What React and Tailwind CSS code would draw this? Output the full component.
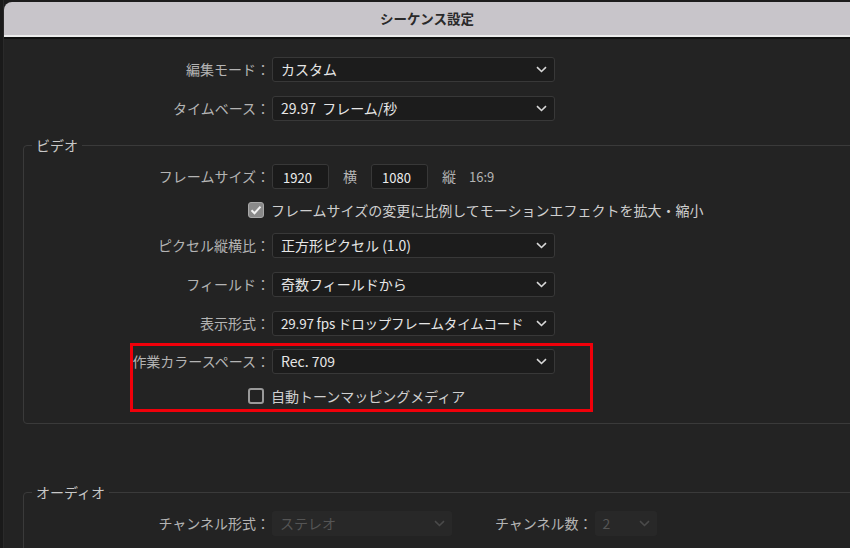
import React from 'react';

const FONT = { fontFamily: '"Noto Sans CJK JP", "Noto Sans", sans-serif' };

const Chevron = ({ className }) => (
    <svg width="11" height="7" viewBox="0 0 11 7" className={className}>
        <path d="M1 1.2l4.5 4.3L10 1.2" fill="none" stroke="currentColor" strokeWidth="1.6" />
    </svg>
);

const Select = ({ value, textClass = 'text-[14px]' }) => (
    <div className="w-[283px] h-[25px] flex items-center justify-between gap-[4px] pl-[8px] pr-[7px] bg-[#1c1c1c] border border-[#383838] rounded-[3px] text-[#e6e6e6]">
        <span className={`${textClass} whitespace-nowrap`}>{value}</span>
        <Chevron className="text-[#d8d8d8] shrink-0" />
    </div>
);

const Row = ({ label, labelClass, children }) => (
    <div className="flex items-center h-[25px] shrink-0">
        <div className={`${labelClass} shrink-0 text-right text-[14px] text-[#b4b4b4] whitespace-nowrap`}>{label}：</div>
        <div className="ml-[2px] flex items-center">{children}</div>
    </div>
);

const Checkbox = ({ checked, label }) => (
    <div className="flex items-center h-[20px] ml-[224px] gap-[7px]">
        {checked ? (
            <div className="w-[16px] h-[16px] rounded-[3px] bg-[#8a8a8a] border border-[#a8a8a8] flex items-center justify-center">
                <svg width="12" height="10" viewBox="0 0 12 10">
                    <path d="M1.5 5.2l3 3 6-6.6" fill="none" stroke="#f2f2f2" strokeWidth="2" />
                </svg>
            </div>
        ) : (
            <div className="w-[16px] h-[16px] rounded-[3px] border-2 border-[#9a9a9a]"></div>
        )}
        <span className="text-[14px] text-[#cfcfcf] whitespace-nowrap">{label}</span>
    </div>
);

const Group = ({ title, className, children }) => (
    <div className={`relative shrink-0 ml-[19px] w-[860px] border border-[#3a3a3a] rounded-[4px] ${className}`}>
        <span className="absolute -top-[11px] left-[8px] px-[4px] bg-[#232323] text-[14px] leading-[20px] text-[#c8c8c8]">{title}</span>
        {children}
    </div>
);

export default function App() {
    return (
        <div className="w-[850px] h-[548px] overflow-hidden flex bg-[#1c1c1c]" style={FONT}>
            <div className="w-[4px] shrink-0 h-full bg-[#1a1a1a] border-r border-[#2a2a2a]"></div>
            <div className="flex-1 min-w-0 flex flex-col pt-[2px]">
                {/* Title bar */}
                <div className="h-[35px] shrink-0 bg-[#c8c5ca] rounded-tl-[8px] border-b-2 border-[#ececec] flex items-center justify-center">
                    <span className="text-[13.5px] font-bold text-[#2a2a2a]">シーケンス設定</span>
                </div>
                <div className="h-[2px] shrink-0 bg-[#111]"></div>

                {/* Body */}
                <div className="flex-1 bg-[#232323] pt-[18px] flex flex-col">
                    <div className="flex flex-col gap-[14px] shrink-0">
                        <Row label="編集モード" labelClass="w-[266px]">
                            <Select value="カスタム" />
                        </Row>
                        <Row label="タイムベース" labelClass="w-[266px]">
                            <Select value={'29.97\u00a0 フレーム/秒'} />
                        </Row>
                    </div>

                    <Group title="ビデオ" className="mt-[24px] pt-[18px] pb-[17px]">
                        <Row label="フレームサイズ" labelClass="w-[246px]">
                            <div className="w-[57px] h-[25px] bg-[#1a1a1a] border border-[#383838] rounded-[3px] pl-[10px] pt-[3px] text-[13px] text-[#ececec]">1920</div>
                            <span className="ml-[14px] text-[14px] text-[#b4b4b4]">横</span>
                            <div className="ml-[14px] w-[57px] h-[25px] bg-[#1a1a1a] border border-[#383838] rounded-[3px] pl-[10px] pt-[3px] text-[13px] text-[#ececec]">1080</div>
                            <span className="ml-[14px] text-[14px] text-[#b4b4b4]">縦</span>
                            <span className="ml-[13px] text-[13px] text-[#b4b4b4]">16:9</span>
                        </Row>
                        <div className="mt-[11px]">
                            <Checkbox checked label="フレームサイズの変更に比例してモーションエフェクトを拡大・縮小" />
                        </div>
                        <div className="mt-[13px] flex flex-col gap-[14px]">
                            <Row label="ピクセル縦横比" labelClass="w-[246px]">
                                <Select value="正方形ピクセル (1.0)" />
                            </Row>
                            <Row label="フィールド" labelClass="w-[246px]">
                                <Select value="奇数フィールドから" />
                            </Row>
                            <Row label="表示形式" labelClass="w-[246px]">
                                <Select value="29.97 fps ドロップフレームタイムコード" textClass="text-[13.5px] tracking-[-0.2px]" />
                            </Row>
                        </div>
                        <div className="relative mt-[13px]">
                            <Row label="作業カラースペース" labelClass="w-[246px]">
                                <Select value="Rec. 709" />
                            </Row>
                            <div className="mt-[12px]">
                                <Checkbox label="自動トーンマッピングメディア" />
                            </div>
                            {/* annotation */}
                            <div className="absolute left-[106px] -top-[6px] w-[463px] h-[69px] border-[3px] border-[#f0000a] pointer-events-none"></div>
                        </div>
                    </Group>

                    <Group title="オーディオ" className="mt-[68px] pt-[18px] pb-[20px]">
                        <div className="flex items-center h-[25px]">
                            <div className="w-[246px] shrink-0 text-right text-[14px] text-[#b4b4b4] whitespace-nowrap">チャンネル形式：</div>
                            <div className="ml-[2px] w-[180px] h-[25px] bg-[#282828] rounded-[3px] flex items-center justify-between pl-[8px] pr-[7px] text-[14px] text-[#555]">
                                <span>ステレオ</span>
                                <Chevron className="text-[#4a4a4a]" />
                            </div>
                            <div className="ml-[43px] text-[14px] text-[#b4b4b4] whitespace-nowrap">チャンネル数：</div>
                            <div className="ml-[2px] w-[62px] h-[25px] bg-[#282828] rounded-[3px] flex items-center justify-between pl-[8px] pr-[7px] text-[14px] text-[#555]">
                                <span>2</span>
                                <Chevron className="text-[#4a4a4a]" />
                            </div>
                        </div>
                    </Group>
                </div>
            </div>
        </div>
    );
}
